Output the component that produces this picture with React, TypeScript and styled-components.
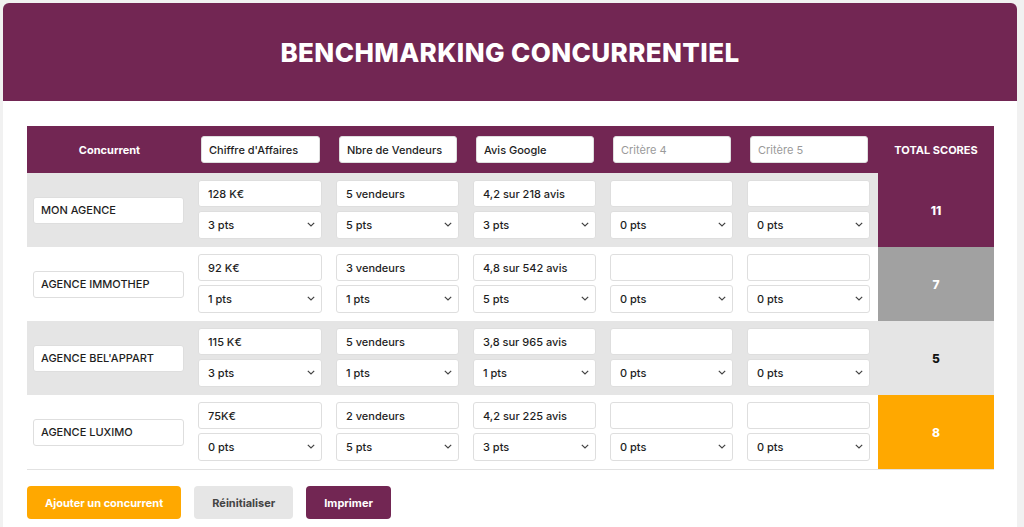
import React from "react";
import styled, { createGlobalStyle } from "styled-components";

const purple = "#722653";
const orange = "#ffa800";

type Row = {
  name: string;
  values: string[];
  points: number[];
  tone: "purple" | "grey" | "plain" | "orange";
};

const criteria = ["Chiffre d'Affaires", "Nbre de Vendeurs", "Avis Google", "", ""];

const rows: Row[] = [
  { name: "MON AGENCE", values: ["128 K€", "5 vendeurs", "4,2 sur 218 avis", "", ""], points: [3, 5, 3, 0, 0], tone: "purple" },
  { name: "AGENCE IMMOTHEP", values: ["92 K€", "3 vendeurs", "4,8 sur 542 avis", "", ""], points: [1, 1, 5, 0, 0], tone: "grey" },
  { name: "AGENCE BEL'APPART", values: ["115 K€", "5 vendeurs", "3,8 sur 965 avis", "", ""], points: [3, 1, 1, 0, 0], tone: "plain" },
  { name: "AGENCE LUXIMO", values: ["75K€", "2 vendeurs", "4,2 sur 225 avis", "", ""], points: [0, 5, 3, 0, 0], tone: "orange" },
];

const GlobalStyle = createGlobalStyle`
  html, body {
    margin: 0;
    background: #f1f1f1;
    font-family: Inter, "Noto Sans", sans-serif;
  }
`;

const Card = styled.div`
  margin: 3px 0 0 3px;
  width: 1014px;
  background: #fff;
  border-radius: 6px 6px 0 0;
  overflow: hidden;
`;

const Banner = styled.header`
  height: 98px;
  background: ${purple};
  display: flex;
  align-items: center;
  justify-content: center;
`;

const Title = styled.h1`
  margin: 0;
  color: #fff;
  font-size: 26px;
  font-weight: 800;
  letter-spacing: 0.4px;
`;

const Body = styled.div`
  padding: 25px 24px 30px;
`;

const Table = styled.div`
  width: 967px;
  border-bottom: 1px solid #e2e2e2;
`;

const GridRow = styled.div<{ $bg: string; $head?: boolean }>`
  display: grid;
  grid-template-columns: 165px 138px 137px 137px 137px 137px 116px;
  height: ${(p) => (p.$head ? "47px" : "74px")};
  background: ${(p) => p.$bg};
`;

const HeadLabel = styled.div`
  display: flex;
  align-items: center;
  justify-content: center;
  color: #fff;
  font-size: 11px;
  font-weight: 700;
`;

const HeadCell = styled.div`
  display: flex;
  align-items: center;
  padding: 0 10px 0 9px;
`;

const NameCell = styled.div`
  display: flex;
  align-items: center;
  padding: 0 8px 0 6px;
`;

const CritCell = styled.div`
  display: flex;
  flex-direction: column;
  justify-content: center;
  gap: 4px;
  padding: 0 8px 1px 6px;
`;

const Field = styled.input<{ $pad?: number }>`
  box-sizing: border-box;
  width: 100%;
  height: 27px;
  border: 1px solid #dedede;
  border-radius: 3px;
  background: #fff;
  padding: 0 ${(p) => p.$pad ?? 9}px;
  font-family: inherit;
  font-size: 11px;
  font-weight: 500;
  color: #1e1e1e;
  outline: none;

  &::placeholder {
    color: #9a9a9a;
    font-weight: 400;
  }
`;

const SelectWrap = styled.div`
  position: relative;
  height: 28px;
`;

const Select = styled.select`
  box-sizing: border-box;
  width: 100%;
  height: 28px;
  appearance: none;
  border: 1px solid #dedede;
  border-radius: 3px;
  background: #fff;
  padding: 0 9px;
  font-family: inherit;
  font-size: 11px;
  font-weight: 500;
  color: #1e1e1e;
  outline: none;
`;

const Chevron = styled.svg`
  position: absolute;
  right: 7px;
  top: 11px;
  pointer-events: none;
`;

const totalStyles = {
  purple: { bg: purple, fg: "#fff" },
  grey: { bg: "#a1a1a1", fg: "#fff" },
  plain: { bg: "transparent", fg: "#111" },
  orange: { bg: orange, fg: "#fff" },
};

const TotalCell = styled.div<{ $bg: string; $fg: string }>`
  display: flex;
  align-items: center;
  justify-content: center;
  background: ${(p) => p.$bg};
  color: ${(p) => p.$fg};
  font-size: 12px;
  font-weight: 800;
`;

const Actions = styled.div`
  display: flex;
  gap: 13px;
  margin-top: 16px;
`;

const Button = styled.button<{ $bg: string; $fg: string }>`
  height: 33px;
  padding: 0 18px;
  border: none;
  border-radius: 4px;
  background: ${(p) => p.$bg};
  color: ${(p) => p.$fg};
  font-family: inherit;
  font-size: 11px;
  font-weight: 700;
  cursor: pointer;
`;

const PointSelect = ({ value }: { value: number }) => (
  <SelectWrap>
    <Select defaultValue={value}>
      {[0, 1, 2, 3, 4, 5].map((n) => (
        <option key={n} value={n}>
          {n} pts
        </option>
      ))}
    </Select>
    <Chevron width="8" height="5" viewBox="0 0 8 5">
      <path d="M0.8 0.8 L4 4 L7.2 0.8" fill="none" stroke="#444" strokeWidth="1.2" />
    </Chevron>
  </SelectWrap>
);

export default function App() {
  return (
    <>
      <GlobalStyle />
      <Card>
        <Banner>
          <Title>BENCHMARKING CONCURRENTIEL</Title>
        </Banner>
        <Body>
          <Table>
            <GridRow $bg={purple} $head>
              <HeadLabel>Concurrent</HeadLabel>
              {criteria.map((c, i) => (
                <HeadCell key={i}>
                  <Field $pad={7} defaultValue={c} placeholder={`Critère ${i + 1}`} />
                </HeadCell>
              ))}
              <HeadLabel>TOTAL SCORES</HeadLabel>
            </GridRow>
            {rows.map((r, ri) => {
              const total = r.points.reduce((a, b) => a + b, 0);
              const t = totalStyles[r.tone];
              return (
                <GridRow key={r.name} $bg={ri % 2 === 0 ? "#e5e5e5" : "#fff"}>
                  <NameCell>
                    <Field $pad={7} defaultValue={r.name} />
                  </NameCell>
                  {r.values.map((v, ci) => (
                    <CritCell key={ci}>
                      <Field defaultValue={v} />
                      <PointSelect value={r.points[ci]} />
                    </CritCell>
                  ))}
                  <TotalCell $bg={t.bg} $fg={t.fg}>
                    {total}
                  </TotalCell>
                </GridRow>
              );
            })}
          </Table>
          <Actions>
            <Button $bg={orange} $fg="#fff">Ajouter un concurrent</Button>
            <Button $bg="#e6e6e6" $fg="#444">Réinitialiser</Button>
            <Button $bg={purple} $fg="#fff">Imprimer</Button>
          </Actions>
        </Body>
      </Card>
    </>
  );
}
